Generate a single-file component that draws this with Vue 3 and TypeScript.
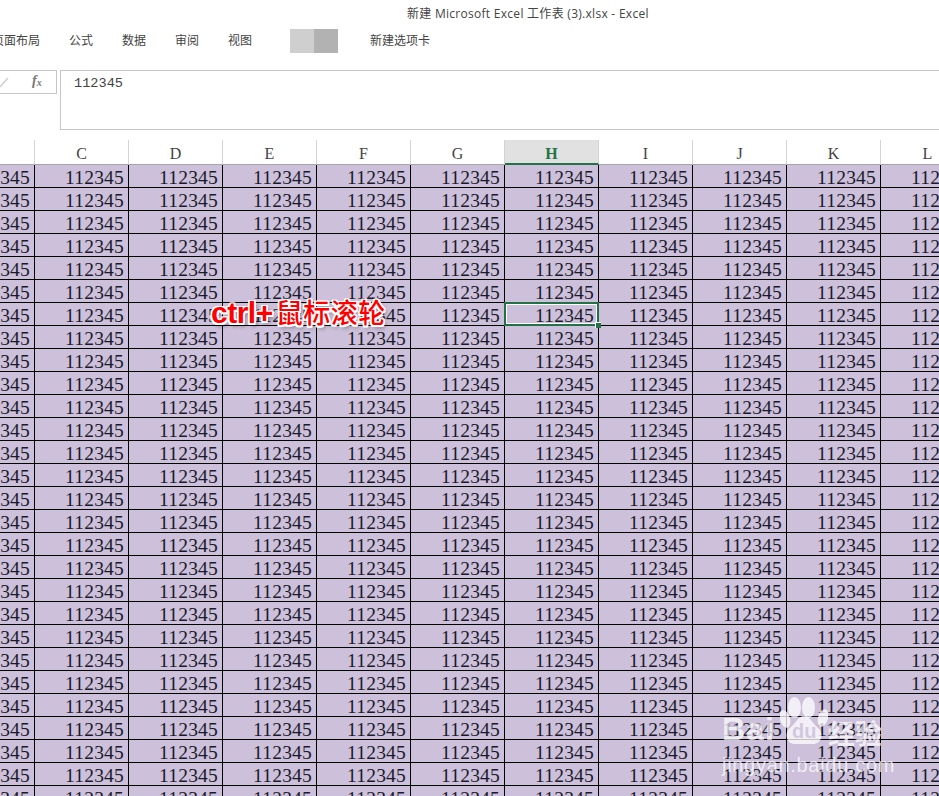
<script setup lang="ts">
const tabs: string[] = ['页面布局', '公式', '数据', '审阅', '视图']
const cols: string[] = ['', 'C', 'D', 'E', 'F', 'G', 'H', 'I', 'J', 'K', 'L']
const rows: number[] = Array.from({ length: 28 }, (_, i) => i)
const selCol = 6
const selRow = 6
</script>

<template>
  <div class="app">
    <div class="title">新建 Microsoft Excel 工作表 (3).xlsx - Excel</div>
    <div class="tabs">
      <span v-for="t in tabs" :key="t" class="tab">{{ t }}</span>
      <span class="swatches"><i class="sw1"></i><i class="sw2"></i></span>
      <span class="tab newtab">新建选项卡</span>
    </div>
    <div class="formula">
      <div class="fx-box">
        <svg class="check" width="12" height="12" viewBox="0 0 12 12"><path d="M1 11 L9 2" fill="none" stroke="#d0d0d0" stroke-width="1.6" /></svg>
        <span class="fx">f<sub>x</sub></span>
      </div>
      <div class="input">112345</div>
    </div>
    <div class="sheet">
      <div class="grid">
        <div
          v-for="(c, i) in cols"
          :key="'h' + i"
          class="head"
          :class="{ active: i === selCol, first: i === 0 }"
        >{{ c }}</div>
        <template v-for="r in rows" :key="r">
          <div
            v-for="(c, i) in cols"
            :key="r + '-' + i"
            class="cell"
            :class="{ first: i === 0, selected: r === selRow && i === selCol }"
          ><span class="val">112345</span></div>
        </template>
      </div>
      <div class="callout"><b>ctrl+</b>鼠标滚轮</div>
      <div class="mark">
        <div class="logo">
          <span class="bai">Bai</span>
          <svg class="paw" width="48" height="47" viewBox="0 0 48 47">
            <g fill="#fff" fill-opacity=".74">
              <ellipse cx="5" cy="22" rx="5" ry="9" transform="rotate(-15 5 22)" />
              <ellipse cx="14.5" cy="10.5" rx="6.5" ry="10.5" />
              <ellipse cx="28.5" cy="10.5" rx="6.5" ry="10.5" />
              <ellipse cx="43" cy="21" rx="5" ry="9" transform="rotate(15 43 21)" />
              <path d="M24 19 C30 19 32 26 38 31 C44 36 42 47 33 47 L15 47 C6 47 4 36 10 31 C16 26 18 19 24 19 Z" />
            </g>
          </svg>
          <span class="du">du</span>
          <span class="jy">经验</span>
        </div>
        <div class="url">jingyan.baidu.com</div>
      </div>
    </div>
  </div>
</template>

<style>
html, body { margin: 0; background: #fff; overflow: hidden; }
</style>

<style scoped>
.app {
  width: 939px;
  height: 796px;
  overflow: hidden;
  background: #fff;
  font-family: "Liberation Sans", "Noto Sans CJK SC", sans-serif;
  color: #444;
}
.title {
  height: 28px;
  line-height: 28px;
  padding-left: 407px;
  font-size: 12px;
  font-family: "Open Sans", "Noto Sans CJK SC", sans-serif;
  color: #444;
  white-space: nowrap;
  letter-spacing: 0.28px;
}
.tabs {
  height: 26px;
  display: flex;
  align-items: center;
  gap: 29px;
  margin-left: -8px;
  font-size: 12px;
  font-family: "Noto Sans CJK SC", sans-serif;
  color: #444;
}
.tab { white-space: nowrap; margin-bottom: 4px; }
.swatches {
  display: flex;
  height: 24px;
  margin-left: 9px;
}
.swatches i { display: block; width: 24px; height: 24px; }
.sw1 { background: #cfcfcf; }
.sw2 { background: #b2b2b2; }
.newtab { margin-left: 3px; }
.formula {
  margin-top: 16px;
  height: 60px;
  display: flex;
  align-items: flex-start;
  gap: 3px;
}
.fx-box {
  box-sizing: border-box;
  width: 57px;
  height: 24px;
  border: 1px solid #c6c6c6;
  border-left: none;
  display: flex;
  align-items: center;
  color: #666;
}
.check { margin-left: -1px; }
.fx {
  margin-left: 21px;
  margin-top: -2px;
  font-family: "Liberation Serif", serif;
  font-style: italic;
  font-weight: bold;
  font-size: 14px;
  color: #777;
}
.fx sub { font-size: 10px; vertical-align: -1px; }
.input {
  box-sizing: border-box;
  flex: 1;
  height: 60px;
  border: 1px solid #c6c6c6;
  border-right: none;
  padding: 4px 0 0 13px;
  font-family: "Liberation Mono", monospace;
  font-size: 13.6px;
  line-height: 18px;
  color: #444;
}
.sheet {
  position: relative;
  margin-top: 10px;
}
.grid {
  display: grid;
  grid-template-columns: 35px repeat(10, 94px);
  grid-auto-rows: 23px;
  grid-template-rows: 25px;
  width: 975px;
}
.head {
  box-sizing: border-box;
  height: 25px;
  border-right: 1px solid #d4d4d4;
  border-bottom: 1px solid #a6a6a6;
  padding-top: 1px;
  text-align: center;
  font-family: "Liberation Serif", serif;
  font-size: 16px;
  line-height: 26px;
  color: #444;
}
.head.active {
  background: #e1e1e1;
  color: #217346;
  font-weight: bold;
  border-bottom: 2px solid #217346;
}
.cell {
  box-sizing: border-box;
  background: #ccc0da;
  border-right: 1px solid #000;
  border-bottom: 1px solid #000;
  display: flex;
  justify-content: flex-end;
  align-items: center;
  padding: 4px 4px 0 0;
  overflow: hidden;
  font-family: "Liberation Serif", serif;
  font-size: 19.5px;
  line-height: 20px;
  letter-spacing: 0.2px;
  color: #1a1a2a;
  position: relative;
}
.val { white-space: nowrap; flex: none; }
.cell.selected {
  overflow: visible;
  z-index: 2;
}
.cell.selected::before {
  content: "";
  position: absolute;
  left: -1px;
  top: -1px;
  right: -1px;
  bottom: -1px;
  border: 2px solid #217346;
  outline: 1px solid #fff;
  outline-offset: -3px;
}
.cell.selected::after {
  content: "";
  position: absolute;
  right: -3px;
  bottom: -3px;
  width: 5px;
  height: 5px;
  background: #217346;
  border: 1px solid #fff;
  border-right: none;
  border-bottom: none;
}
.callout {
  position: absolute;
  left: 211px;
  top: 156px;
  z-index: 3;
  white-space: nowrap;
  font-family: "Liberation Sans", "Noto Sans CJK SC", sans-serif;
  font-size: 27px;
  line-height: 34px;
  font-weight: 500;
  color: #ff0000;
  letter-spacing: 0.5px;
  text-shadow:
    -1.5px 0 0 #fff, 1.5px 0 0 #fff, 0 -1.5px 0 #fff, 0 1.5px 0 #fff,
    -1.5px -1.5px 0 #fff, 1.5px 1.5px 0 #fff, -1.5px 1.5px 0 #fff, 1.5px -1.5px 0 #fff,
    2px 3px 4px rgba(0, 0, 0, .45);
}
.callout b {
  font-weight: bold;
  font-size: 30px;
  letter-spacing: -0.5px;
  margin-right: 3px;
}
.mark {
  position: absolute;
  left: 722px;
  top: 549px;
  z-index: 3;
  width: 175px;
  color: rgba(255, 255, 255, .74);
}
.logo {
  display: flex;
  align-items: flex-end;
  height: 59px;
  font-family: "Liberation Sans", sans-serif;
  font-weight: bold;
  white-space: nowrap;
}
.bai {
  font-size: 32px;
  line-height: 32px;
  letter-spacing: 1px;
  width: 53px;
  margin-bottom: 3px;
}
.paw { margin: 0 0 4px 5px; flex: none; }
.du {
  font-size: 20px;
  line-height: 26px;
  margin: 0 0 4px -36px;
  width: 25px;
  flex: none;
  color: rgba(204, 192, 218, .85);
}
.jy {
  font-family: "Noto Sans CJK SC", sans-serif;
  font-size: 27px;
  line-height: 34px;
  margin-left: 11px;
  margin-bottom: -2px;
  font-weight: 700;
}
.url {
  font-family: "Liberation Sans", sans-serif;
  font-size: 20px;
  line-height: 22px;
  margin-top: 6px;
  letter-spacing: .7px;
  white-space: nowrap;
}
</style>
